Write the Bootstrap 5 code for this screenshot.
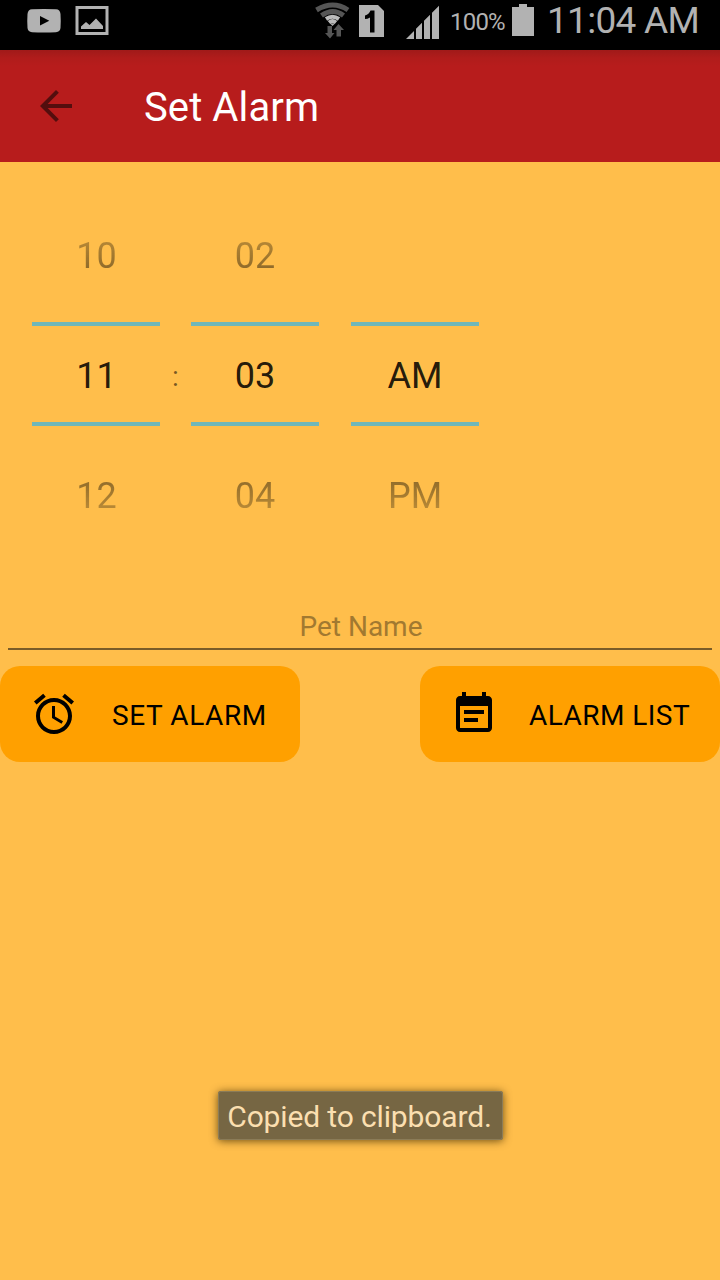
<!DOCTYPE html>
<html lang="en">
<head>
<meta charset="utf-8">
<meta name="viewport" content="width=device-width, initial-scale=1">
<title>Set Alarm</title>
<link href="https://cdn.jsdelivr.net/npm/bootstrap@5.3.0/dist/css/bootstrap.min.css" rel="stylesheet">
<style>
body{font-family:Roboto,"Noto Sans",sans-serif;background:#ffbe4b;height:1280px;width:720px;overflow:hidden}
svg{display:block;flex:none}
.status{height:50px;background:#000;color:#b2b2b2;padding-left:27px}
.status svg{fill:#b2b2b2}
.pct{font-size:24px;line-height:44px;margin-left:11px;width:56px;white-space:nowrap;letter-spacing:-.8px}
.clock{font-size:37px;line-height:42px;margin-left:13px;white-space:nowrap;letter-spacing:-.7px}
.appbar{height:112px;background:linear-gradient(#a01a19 0,#b01c1b 8px,#b71c1c 16px);padding-left:32px}
.appbar h1{font-size:40px;line-height:48px;margin-left:64px;padding-top:4px;color:#fff;letter-spacing:.1px}
.picker{height:424px;padding:34px 32px 0}
.wheel{width:128px;font-size:36px;line-height:48px;color:rgba(0,0,0,.87)}
.wheel div{height:126px}
.wheel .now{height:104px;border-top:4px solid #6fb7b9;border-bottom:4px solid #6fb7b9;padding-top:4px}
.wheel .before{-webkit-mask-image:linear-gradient(transparent -8px,rgba(0,0,0,.52) 76px);padding-bottom:6px}
.wheel .after{-webkit-mask-image:linear-gradient(rgba(0,0,0,.52) 50px,transparent 134px);padding-top:14px}
.hours div{padding-left:1px}
.colon{width:31px;font-size:28px;color:rgba(0,0,0,.54);height:362px}
.pet{height:64px;margin:0 8px;border:0;border-bottom:2px solid #7a5c28;border-radius:0;padding:19px 0 0 2px;width:704px;font-size:28px;text-align:center}
.pet,.pet:focus{background:transparent;box-shadow:none}
.pet::placeholder{color:#a27930;opacity:1}
.action{width:300px;height:96px;border-radius:20px;background:#ffa000;font-size:28px;padding:0 0 0 30px;border:0;color:#000}
.action:hover{background:#ffa000;color:#000}
.action span{padding-top:4px;white-space:nowrap;letter-spacing:.6px}
.note{left:218px;top:1091px;width:285px;height:49px;border-radius:3px;background:#766643;color:#fbdfb0;font-size:30px;line-height:51px;box-shadow:0 1px 8px rgba(60,40,0,.75),inset 0 0 0 1px #8b7c58;white-space:nowrap;letter-spacing:-.14px;padding-right:2px}
</style>
</head>
<body>
<header class="status d-flex align-items-start">
  <svg width="34" height="50" viewBox="0 0 34 50"><path fill-rule="evenodd" d="M5 9.3Q17 8.700 29 9.300Q33 9.500 33.500 14Q34 21 33.500 28Q33 32 29 32.200Q17 32.800 5 32.200Q1 32 .5 28Q0 21 .5 14Q1 9.500 5 9.300ZM13 16V25.500L22.300 20.700Z"/></svg>
  <svg style="margin-left:14px" width="34" height="50" viewBox="0 0 34 50"><path fill-rule="evenodd" d="M.5 6H33.500V35H.5ZM3.500 9V32H30.500V9Z"/><path d="M6 29V26.500L11 22L14.500 25L21 18.500L28 26V29Z"/></svg>
  <svg style="margin-left:206px" width="36" height="50" viewBox="0 0 36 50"><g fill="none" stroke="#555" stroke-width="5"><path d="M1.500 10Q18 0 33 10"/><path d="M6.500 15.500Q18 7.500 28.500 15.500"/></g><g fill="none" stroke="#bbb" stroke-width="4"><path d="M11 19Q17.500 14.500 24 19"/><path d="M14 22.500Q17.500 19.800 21 22.500"/></g><path d="M15 23.500H20L17.500 26Z"/><path fill="#555" d="M12.500 26H17V33H19.500L15 38.500L10 33H12.500ZM23.500 24L29 30H26V36.500H21.500V30H18.500Z"/></svg>
  <svg style="margin-left:8px" width="25" height="50" viewBox="0 0 25 50"><path d="M0 5H19L25 11V37H0Z"/><path fill="#000" d="M11.500 10.500H15.500V32.500H11V17.500Q8.500 19 6 19V15.500Q10 14.500 11.500 10.500Z"/></svg>
  <svg style="margin-left:22px" width="33" height="50" viewBox="0 0 33 50"><path d="M0 39L8 31V39ZM10 28.800L16 22.800V39H10ZM18 20.800L24 14.800V39H18ZM26 12.800L33 5.800V39H26Z"/></svg>
  <span class="pct">100%</span>
  <svg style="margin-left:6px" width="22" height="50" viewBox="0 0 22 50"><path d="M7 4H15V7H22V36H0V7H7Z"/></svg>
  <span class="clock">11:04 AM</span>
</header>

<nav class="appbar d-flex align-items-center">
  <svg width="48" height="48" viewBox="0 0 24 24" fill="#540e0e"><path d="M20 11H7.830l5.590-5.590L12 4l-8 8 8 8 1.410-1.410L7.830 13H20v-2z"/></svg>
  <h1 class="fw-normal mb-0">Set Alarm</h1>
</nav>

<main>
  <section class="picker d-flex text-center">
    <div class="wheel hours">
      <div class="before d-flex align-items-center justify-content-center">10</div>
      <div class="now d-flex align-items-center justify-content-center">11</div>
      <div class="after d-flex align-items-center justify-content-center">12</div>
    </div>
    <div class="colon d-flex align-items-center justify-content-center">:</div>
    <div class="wheel">
      <div class="before d-flex align-items-center justify-content-center">02</div>
      <div class="now d-flex align-items-center justify-content-center">03</div>
      <div class="after d-flex align-items-center justify-content-center">04</div>
    </div>
    <div class="wheel" style="margin-left:32px">
      <div class="before"></div>
      <div class="now d-flex align-items-center justify-content-center">AM</div>
      <div class="after d-flex align-items-center justify-content-center">PM</div>
    </div>
  </section>
  <input class="pet form-control" type="text" placeholder="Pet Name" aria-label="Pet Name">
  <div class="d-flex justify-content-between pt-3">
    <button class="action btn d-flex align-items-center" type="button">
      <svg width="48" height="48" viewBox="0 0 24 24"><path d="M22 5.720l-4.600-3.860-1.290 1.530 4.600 3.860L22 5.720zM7.880 3.390L6.600 1.860 2 5.710l1.290 1.530 4.590-3.850zM12.500 8H11v6l4.750 2.850.75-1.230-4-2.370V8zM12 4c-4.970 0-9 4.030-9 9s4.020 9 9 9c4.970 0 9-4.030 9-9s-4.030-9-9-9zm0 16c-3.870 0-7-3.130-7-7s3.130-7 7-7 7 3.130 7 7-3.130 7-7 7z"/></svg>
      <span style="margin-left:34px">SET ALARM</span>
    </button>
    <button class="action btn d-flex align-items-center" type="button">
      <svg width="48" height="48" viewBox="0 0 24 24"><path d="M19 3h-1V1h-2v2H8V1H6v2H5c-1.110 0-1.990.9-1.990 2L3 19c0 1.100.89 2 2 2h14c1.100 0 2-.9 2-2V5c0-1.100-.9-2-2-2zm0 16H5V8h14v11zM7 10h10v2H7zM7 14h7v2H7z"/></svg>
      <span style="margin-left:31px;letter-spacing:.45px">ALARM LIST</span>
    </button>
  </div>
</main>
<div class="note position-absolute text-center" role="status">Copied to clipboard.</div>
<script src="https://cdn.jsdelivr.net/npm/bootstrap@5.3.0/dist/js/bootstrap.bundle.min.js"></script>
</body>
</html>
